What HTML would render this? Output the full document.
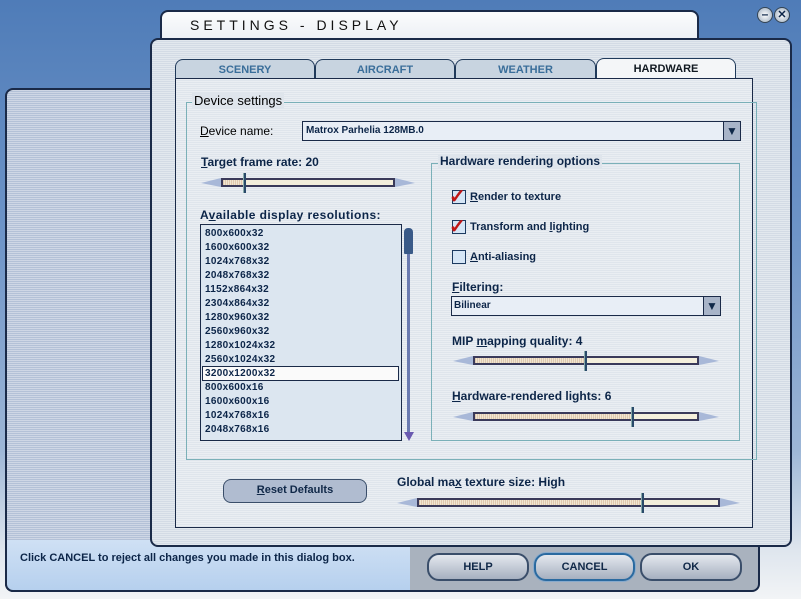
<!DOCTYPE html>
<html><head><meta charset="utf-8">
<style>
*{margin:0;padding:0;box-sizing:border-box}
body{width:801px;height:599px;overflow:hidden;position:relative;font-family:"Liberation Sans",sans-serif;font-weight:bold;color:#0c2548;
background:linear-gradient(180deg,#4f7cb8 0%,#6f95c8 40%,#9db6d6 75%,#dfe6ee 92%,#f2f4f6 100%)}
.a{position:absolute}
.stripe{background-color:#d9e0e8;background-image:repeating-linear-gradient(180deg,rgba(255,255,255,.35) 0 1px,rgba(0,0,0,0) 1px 2px)}
.lbl{font-size:12px;position:absolute;white-space:nowrap}
.tab{position:absolute;top:59px;height:20px;border:1px solid #203a5a;border-bottom:none;border-radius:8px 8px 0 0;background:#c8d4e0;color:#3a6e9a;font-size:11px;text-align:center;line-height:20px}
.sl{position:absolute;height:20px}
.sl .tl{position:absolute;left:0;top:5px;width:0;height:0;border-right:20px solid #a8b8d8;border-top:5px solid transparent;border-bottom:4px solid transparent}
.sl .tr{position:absolute;right:0;top:5px;width:0;height:0;border-left:20px solid #a8b8d8;border-top:5px solid transparent;border-bottom:4px solid transparent}
.sl .tk{position:absolute;left:20px;right:20px;top:5px;height:9px;background:#f4efdc;border:2px solid #3a3a5a}
.sl .fl{position:absolute;left:0;top:0;bottom:0;background:repeating-linear-gradient(90deg,#e0c8b0 0 1px,#f0e6d0 1px 2px)}
.sl .th{position:absolute;top:0;width:3px;height:20px;background:#2a4a6a;border-left:1px solid #8aa}
.chk{position:absolute;width:14px;height:14px;border:1px solid #1c3a60;background:#d6e6f6}
.btn{position:absolute;height:28px;border:2px solid #3a4e6a;border-radius:12px;background:linear-gradient(#e4e8ee,#a6b0c0);font-size:11px;text-align:center;line-height:24px;color:#102848}
u{text-decoration:underline}
</style></head><body>
<!-- left panel -->
<div class="a stripe" style="left:5px;top:88px;width:147px;height:504px;border:2px solid #1a2a48;border-right:none;border-radius:8px 0 0 8px;background-color:#b3c1d7"></div>
<!-- bottom bar -->
<div class="a" style="left:5px;top:540px;width:407px;height:52px;background:linear-gradient(#cfe0f4,#b6d0ee);border-left:2px solid #1a2a48;border-bottom:2px solid #1a2a48;border-radius:0 0 0 8px"></div>
<div class="a" style="left:410px;top:540px;width:350px;height:52px;background:#a9b2be;border-bottom:2px solid #1a2a48;border-right:2px solid #1a2a48;border-radius:0 0 8px 0"></div>
<div class="lbl" style="left:20px;top:552px;font-size:11px">Click CANCEL to reject all changes you made in this dialog box.</div>
<div class="btn" style="left:427px;top:553px;width:102px">HELP</div>
<div class="btn" style="left:534px;top:553px;width:101px;border-color:#2a6aa0;box-shadow:0 0 0 1px #8ac">CANCEL</div>
<div class="btn" style="left:640px;top:553px;width:102px">OK</div>
<!-- title tab -->
<div class="a" style="left:160px;top:10px;width:539px;height:40px;background:linear-gradient(#fbfcfd,#e6ebf1);border:2px solid #1a2a48;border-bottom:none;border-radius:8px 8px 0 0"></div>
<div class="lbl" style="left:190px;top:17px;font-size:14px;letter-spacing:4px;font-weight:normal;color:#111">SETTINGS - DISPLAY</div>
<!-- min/close -->
<div class="a" style="left:757px;top:7px;width:16px;height:16px;border-radius:50%;background:radial-gradient(#fff,#9ab);border:1px solid #345;font-size:12px;line-height:13px;text-align:center">–</div>
<div class="a" style="left:774px;top:7px;width:16px;height:16px;border-radius:50%;background:radial-gradient(#fff,#9ab);border:1px solid #345;font-size:11px;line-height:14px;text-align:center">✕</div>
<!-- main panel -->
<div class="a stripe" style="left:150px;top:38px;width:642px;height:509px;border:2px solid #1a2a48;border-radius:8px;background-color:#d3dbe5"></div>
<div class="tab" style="left:175px;width:140px">SCENERY</div>
<div class="tab" style="left:315px;width:140px">AIRCRAFT</div>
<div class="tab" style="left:455px;width:141px">WEATHER</div>
<div class="tab" style="left:596px;width:140px;background:#f4f6f8;color:#101820;top:58px;height:21px">HARDWARE</div>
<div class="a stripe" style="left:175px;top:78px;width:578px;height:450px;border:1px solid #1a2a48;background-color:#dfe5ec"></div>
<!-- device settings fieldset -->
<div class="a" style="left:186px;top:102px;width:571px;height:358px;border:1px solid #7ab0b8"></div>
<div class="lbl" style="left:192px;top:93px;font-size:13px;background:#dfe5ec;padding:0 2px;font-weight:normal;color:#000">Device settings</div>
<div class="lbl" style="left:200px;top:124px;font-size:12px;font-weight:normal;color:#000"><u>D</u>evice name:</div>
<div class="a" style="left:302px;top:121px;width:439px;height:20px;border:1px solid #1a2a48;background:#e8eef6"></div>
<div class="lbl" style="left:306px;top:125px;font-size:10px;color:#0c2548">Matrox Parhelia 128MB.0</div>
<div class="a" style="left:723px;top:122px;width:17px;height:18px;background:#a8b4c8;border-left:1px solid #1a2a48;color:#102848;font-size:12px;text-align:center;line-height:18px">▼</div>
<div class="lbl" style="left:201px;top:155px;font-size:12px"><u>T</u>arget frame rate: 20</div>
<div class="sl" style="left:201px;top:173px;width:214px"><div class="tl"></div><div class="tk"><div class="fl" style="width:20px"></div></div><div class="th" style="left:42px"></div><div class="tr"></div></div>
<div class="lbl" style="left:200px;top:208px;font-size:12px;letter-spacing:.4px">A<u>v</u>ailable display resolutions:</div>
<div class="a" style="left:200px;top:224px;width:202px;height:217px;border:1px solid #1a2a48;background:#dce6f0"></div>
<div class="a" style="left:202px;top:366px;width:197px;height:15px;border:1px solid #1a2a48;background:#fafafa"></div>
<div class="a" style="left:205px;top:227px;font-size:10px;line-height:14px;letter-spacing:.3px">800x600x32<br>1600x600x32<br>1024x768x32<br>2048x768x32<br>1152x864x32<br>2304x864x32<br>1280x960x32<br>2560x960x32<br>1280x1024x32<br>2560x1024x32<br>3200x1200x32<br>800x600x16<br>1600x600x16<br>1024x768x16<br>2048x768x16</div>
<div class="a" style="left:407px;top:232px;width:3px;height:204px;background:#6a7ab0"></div>
<div class="a" style="left:404px;top:228px;width:9px;height:26px;background:#3a5a88;border-radius:4px 4px 1px 1px"></div>
<div class="a" style="left:404px;top:432px;width:0;height:0;border-left:5px solid transparent;border-right:5px solid transparent;border-top:9px solid #6a5ab0"></div>
<!-- hardware options -->
<div class="a" style="left:431px;top:163px;width:309px;height:278px;border:1px solid #7ab0b8"></div>
<div class="lbl" style="left:438px;top:154px;font-size:12px;background:#dfe5ec;padding:0 2px">Hardware rendering options</div>
<div class="chk" style="left:452px;top:190px"></div><div class="lbl" style="left:449px;top:184px;color:#c01818;font-size:20px">✓</div>
<div class="lbl" style="left:470px;top:191px;font-size:11px"><u>R</u>ender to texture</div>
<div class="chk" style="left:452px;top:220px"></div><div class="lbl" style="left:449px;top:214px;color:#c01818;font-size:20px">✓</div>
<div class="lbl" style="left:470px;top:221px;font-size:11px">Transform and <u>l</u>ighting</div>
<div class="chk" style="left:452px;top:250px"></div>
<div class="lbl" style="left:470px;top:251px;font-size:11px"><u>A</u>nti-aliasing</div>
<div class="lbl" style="left:452px;top:280px;font-size:12px"><u>F</u>iltering:</div>
<div class="a" style="left:451px;top:296px;width:270px;height:20px;border:1px solid #1a2a48;background:#e8eef6"></div>
<div class="lbl" style="left:454px;top:300px;font-size:10px">Bilinear</div>
<div class="a" style="left:703px;top:297px;width:17px;height:18px;background:#a8b4c8;border-left:1px solid #1a2a48;color:#102848;font-size:12px;text-align:center;line-height:18px">▼</div>
<div class="lbl" style="left:452px;top:334px;font-size:12px">MIP <u>m</u>apping quality: 4</div>
<div class="sl" style="left:453px;top:351px;width:266px"><div class="tl"></div><div class="tk"><div class="fl" style="width:110px"></div></div><div class="th" style="left:131px"></div><div class="tr"></div></div>
<div class="lbl" style="left:452px;top:389px;font-size:12px"><u>H</u>ardware-rendered lights: 6</div>
<div class="sl" style="left:453px;top:407px;width:266px"><div class="tl"></div><div class="tk"><div class="fl" style="width:157px"></div></div><div class="th" style="left:178px"></div><div class="tr"></div></div>
<!-- bottom area -->
<div class="btn" style="left:223px;top:479px;width:144px;height:24px;line-height:20px;border-radius:8px;border-width:1px;background:#b0bcd0;font-size:11px"><u>R</u>eset Defaults</div>
<div class="lbl" style="left:397px;top:475px;font-size:12px">Global ma<u>x</u> texture size: High</div>
<div class="sl" style="left:397px;top:493px;width:343px"><div class="tl"></div><div class="tk"><div class="fl" style="width:222px"></div></div><div class="th" style="left:244px"></div><div class="tr"></div></div>
</body></html>
